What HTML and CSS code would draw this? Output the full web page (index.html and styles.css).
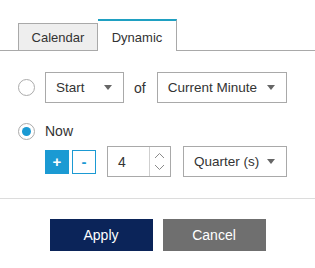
FILE: index.html
```html
<!DOCTYPE html>
<html>
<head>
<meta charset="utf-8">
<link rel="stylesheet" href="styles.css">
</head>
<body>
<div class="tabs">
  <div class="tab">Calendar</div>
  <div class="tab active">Dynamic</div>
</div>
<div class="content">
  <div class="row row-first">
    <span class="radio"></span>
    <div class="select select-start"><span>Start</span><i class="caret"></i></div>
    <span class="of">of</span>
    <div class="select select-unit"><span>Current Minute</span><i class="caret"></i></div>
  </div>
  <div class="row row-now">
    <span class="radio checked"></span>
    <span class="label">Now</span>
  </div>
  <div class="row row-offset">
    <button class="sign plus">+</button>
    <button class="sign minus">-</button>
    <div class="number">
      <span class="value">4</span>
      <span class="spin">
        <svg width="20" height="29" viewBox="0 0 20 29"><polyline points="5,11 9.5,6.5 14,11" fill="none" stroke="#8a8a8a" stroke-width="1"/><polyline points="5,18 9.5,22.5 14,18" fill="none" stroke="#8a8a8a" stroke-width="1"/></svg>
      </span>
    </div>
    <div class="select select-period"><span>Quarter (s)</span><i class="caret"></i></div>
  </div>
</div>
<div class="footer">
  <button class="btn apply">Apply</button>
  <button class="btn cancel">Cancel</button>
</div>
</body>
</html>
```
FILE: styles.css
```css
html, body {
  margin: 0;
  padding: 0;
  background: #fff;
}
body {
  font-family: "Liberation Sans", Arial, sans-serif;
  color: #333;
  font-size: 14px;
  width: 315px;
  height: 268px;
  overflow: hidden;
}
.tabs {
  display: flex;
  align-items: flex-end;
  padding: 19px 0 0 18px;
  border-bottom: 1px solid #a9a9a9;
  height: 31px;
}
.tab {
  box-sizing: border-box;
  width: 80px;
  height: 27px;
  background: #eeeeee;
  border: 1px solid #a9a9a9;
  border-bottom: none;
  font-size: 13px;
  color: #333;
  display: flex;
  align-items: center;
  justify-content: center;
  padding-top: 1px;
}
.tab.active {
  width: 79px;
  height: 32px;
  background: #fff;
  border-left: none;
  border-top: 2px solid #1fa0c2;
  margin-bottom: -1px;
  padding-top: 3px;
}
.content {
  padding: 21px 0 0 18px;
  box-sizing: border-box;
  border-bottom: 1px solid #dcdcdc;
  height: 148px;
}
.row {
  display: flex;
  align-items: center;
  white-space: nowrap;
}
.radio {
  flex: none;
  box-sizing: border-box;
  width: 17px;
  height: 17px;
  border: 1px solid #ababab;
  border-radius: 50%;
  margin-right: 10px;
  display: flex;
  align-items: center;
  justify-content: center;
  background: #fff;
}
.radio.checked::after {
  content: "";
  width: 9px;
  height: 9px;
  border-radius: 50%;
  background: #1b9ad3;
}
.select {
  flex: none;
  box-sizing: border-box;
  height: 31px;
  border: 1px solid #a9a9a9;
  display: flex;
  align-items: center;
  padding: 0 10px;
  background: #fff;
  color: #333;
  font-size: 13.5px;
  white-space: nowrap;
}
.select span {
  flex: 1;
}
.caret {
  flex: none;
  width: 0;
  height: 0;
  border-left: 4px solid transparent;
  border-right: 4px solid transparent;
  border-top: 5px solid #666;
  margin-left: 8px;
}
.select-start {
  width: 79px;
  padding-right: 11px;
}
.select-unit {
  width: 130px;
  padding-right: 11px;
}
.select-period {
  width: 104px;
  padding-right: 13px;
  margin-left: 12px;
}
.of {
  margin: 0 11px 0 10px;
}
.row-now {
  margin-top: 20px;
}
.row-now .label {
  line-height: 17px;
}
.row-offset {
  margin-top: 6px;
  padding-left: 27px;
}
.sign {
  flex: none;
  box-sizing: border-box;
  width: 24px;
  height: 24px;
  border: 1px solid #1b9ad3;
  font-family: "Liberation Sans", Arial, sans-serif;
  font-size: 15px;
  font-weight: bold;
  padding: 0;
  margin: 0;
  display: flex;
  align-items: center;
  justify-content: center;
}
.plus {
  background: #1b9ad3;
  color: #fff;
}
.minus {
  background: #fff;
  color: #1b9ad3;
  margin-left: 3px;
}
.number {
  flex: none;
  box-sizing: border-box;
  width: 64px;
  height: 31px;
  border: 1px solid #a9a9a9;
  margin-left: 11px;
  display: flex;
  align-items: center;
}
.number .value {
  flex: 1;
  padding-left: 10px;
}
.spin {
  width: 20px;
  height: 29px;
  border-left: 1px solid #cfcfcf;
  display: flex;
}
.footer {
  display: flex;
  justify-content: center;
  gap: 10px;
  padding-top: 20px;
}
.btn {
  width: 103px;
  height: 32px;
  border: none;
  font-family: "Liberation Sans", Arial, sans-serif;
  font-size: 14px;
  color: #fff;
  padding: 0;
}
.apply {
  background: #0b2459;
}
.cancel {
  background: #6f6f6f;
}
```
